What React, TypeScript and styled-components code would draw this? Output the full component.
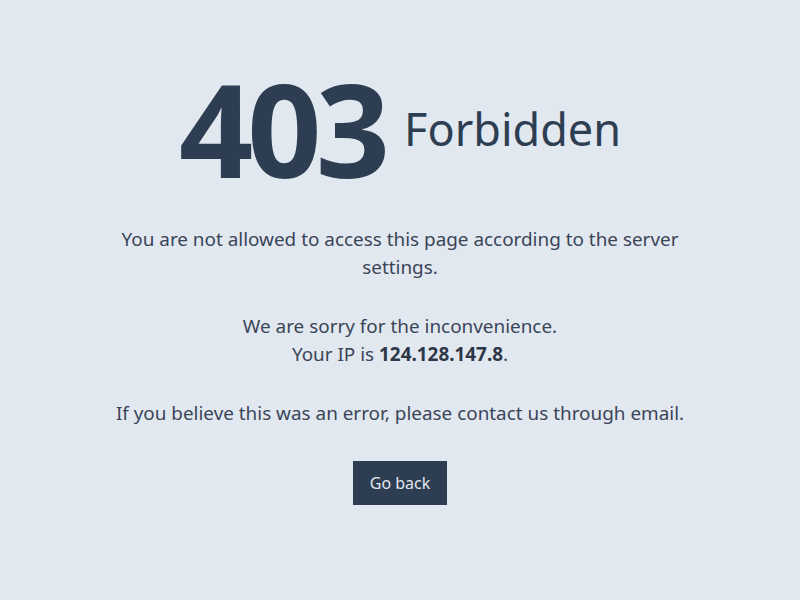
import React from "react";
import styled, { createGlobalStyle } from "styled-components";

const GlobalStyle = createGlobalStyle`
  html, body {
    margin: 0;
    padding: 0;
    background: #e2e8f0;
  }
  body {
    font-family: "Noto Sans", "Open Sans", sans-serif;
    color: #2d3748;
  }
`;

const Page = styled.main`
  min-height: 100vh;
  display: flex;
  flex-direction: column;
  align-items: center;
  justify-content: center;
  box-sizing: border-box;
  padding: 0 16px 32px;
`;

const Heading = styled.h1`
  display: flex;
  align-items: center;
  gap: 20px;
  margin: 0 0 32px;
  font-weight: 400;
`;

const Code = styled.span`
  font-size: 130px;
  font-weight: 700;
  line-height: 1;
  letter-spacing: -6px;
  color: #2d3e52;
`;

const Title = styled.span`
  font-size: 45px;
  line-height: 1;
  color: #2d3e52;
`;

const Body = styled.div`
  max-width: 620px;
  text-align: center;
  font-size: 18.9px;
  line-height: 28px;
  color: #3a4558;
`;

const Paragraph = styled.p`
  margin: 0 0 31px;

  strong {
    font-weight: 700;
    color: #2d3748;
  }
`;

const Button = styled.a`
  display: inline-block;
  margin-top: 3px;
  padding: 10px 17px;
  font-size: 16px;
  line-height: 24px;
  background: #2d3e52;
  color: #e2e8f0;
  text-decoration: none;
  cursor: pointer;

  :hover {
    background: #1a2433;
  }
`;

export default function App() {
  return (
    <>
      <GlobalStyle />
      <Page>
        <Heading>
          <Code>403</Code>
          <Title>Forbidden</Title>
        </Heading>
        <Body>
          <Paragraph>
            You are not allowed to access this page according to the server settings.
          </Paragraph>
          <Paragraph>
            We are sorry for the inconvenience.
            <br />
            Your IP is <strong>124.128.147.8</strong>.
          </Paragraph>
          <Paragraph>
            If you believe this was an error, please contact us through email.
          </Paragraph>
        </Body>
        <Button href="#">Go back</Button>
      </Page>
    </>
  );
}
